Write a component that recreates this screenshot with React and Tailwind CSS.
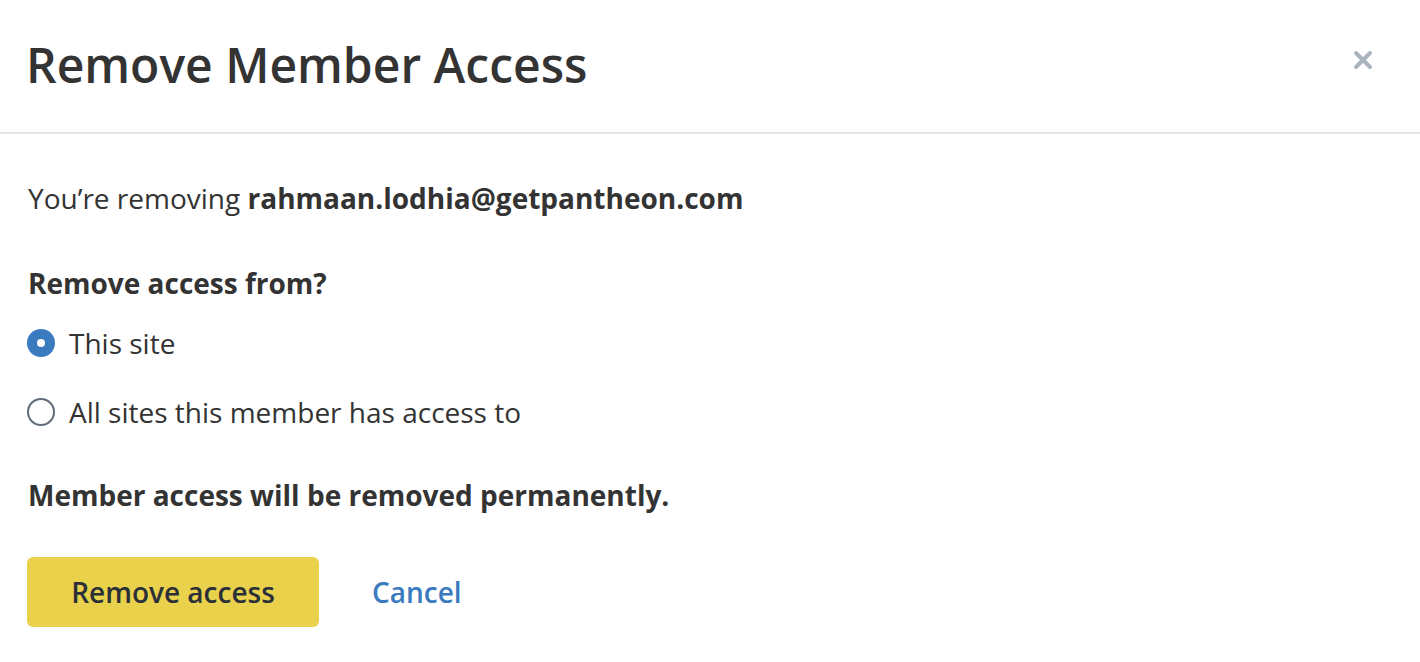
import React from "react";

export default function App() {
  return (
    <div className="w-[1420px] h-[662px] bg-white text-[#333333] overflow-hidden" style={{ fontFamily: '"Open Sans", sans-serif' }}>
      <div className="h-[134px] border-b-2 border-[#e4e7ea] flex items-center justify-between pl-[26px] pr-[46px]">
        <h1 className="text-[48px] font-semibold leading-none mt-[-2px]">Remove Member Access</h1>
        <button className="text-[#a9b4be] mt-[-12px]">
          <svg width="22" height="22" viewBox="0 0 22 22">
            <path d="M4 4 L18 18 M18 4 L4 18" stroke="currentColor" strokeWidth="4" strokeLinecap="round" />
          </svg>
        </button>
      </div>
      <div className="pl-[27px] pt-[46px]">
        <p className="text-[28px] leading-[36px] pl-[1px]">
          You’re removing <span className="font-bold">rahmaan.lodhia@getpantheon.com</span>
        </p>
        <p className="text-[28px] leading-[36px] font-bold mt-[49px] pl-[1px]">Remove access from?</p>
        <div className="mt-[24px] flex flex-col gap-[33px]">
          <label className="flex items-center gap-[14px] text-[28px] leading-[36px]">
            <span className="w-[28px] h-[28px] rounded-full bg-[#3a7bbf] flex items-center justify-center">
              <span className="w-[8px] h-[8px] rounded-full bg-white"></span>
            </span>
            This site
          </label>
          <label className="flex items-center gap-[14px] text-[28px] leading-[36px]">
            <span className="w-[28px] h-[28px] rounded-full border-2 border-[#5f6b78] bg-white"></span>
            All sites this member has access to
          </label>
        </div>
        <p className="text-[28px] leading-[36px] font-bold mt-[47px] pl-[1px]">Member access will be removed permanently.</p>
        <div className="mt-[44px] flex items-center gap-[53px]">
          <button className="w-[292px] h-[70px] rounded-[6px] bg-[#e9d14b] text-[#2b3038] text-[28px] font-semibold">Remove access</button>
          <button className="text-[#3a7bbf] text-[28px] font-semibold">Cancel</button>
        </div>
      </div>
    </div>
  );
}
